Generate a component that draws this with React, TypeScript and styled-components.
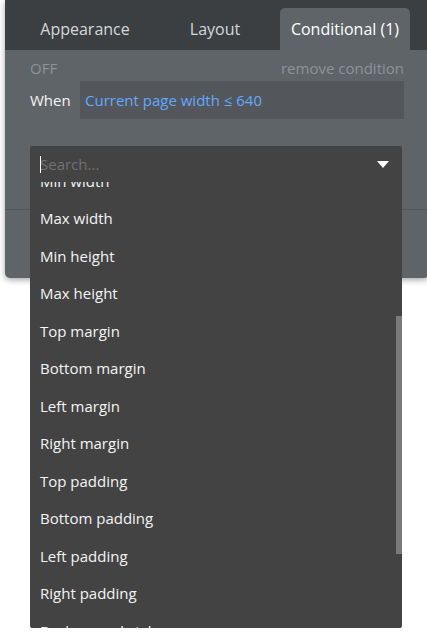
import React, { useLayoutEffect, useRef } from 'react'
import styled, { createGlobalStyle } from 'styled-components'

const GlobalStyle = createGlobalStyle`
  html, body {
    margin: 0;
    padding: 0;
    background: #ffffff;
    overflow: hidden;
  }
  body {
    font-family: 'Open Sans', 'Noto Sans', sans-serif;
  }
`

const TABS = ['Appearance', 'Layout', 'Conditional (1)']

const PROPERTIES = [
  'This element is visible',
  'This element is clickable',
  'Opacity',
  'Fit width to content',
  'Fit height to content',
  'Width',
  'Min width',
  'Max width',
  'Min height',
  'Max height',
  'Top margin',
  'Bottom margin',
  'Left margin',
  'Right margin',
  'Top padding',
  'Bottom padding',
  'Left padding',
  'Right padding',
  'Background style',
  'Border style - all borders',
  'Shadow style',
  'Font',
]

const Page = styled.div`
  width: 427px;
  height: 637px;
  overflow: hidden;
`

const Panel = styled.div`
  margin-left: 5px;
  width: 424px;
  height: 278px;
  background: #5f6468;
  border-radius: 0 0 5px 5px;
  box-shadow: 0 2px 6px rgba(0, 0, 0, 0.35);
`

const TabBar = styled.div`
  height: 50px;
  background: #3b3f42;
  display: flex;
  align-items: flex-end;
  padding-left: 15px;
`

const Tab = styled.div<{ $active?: boolean }>`
  width: 130px;
  height: 42px;
  display: flex;
  align-items: center;
  justify-content: center;
  padding-bottom: 1px;
  box-sizing: border-box;
  font-size: 16px;
  color: ${({ $active }) => ($active ? '#ffffff' : '#d6d8da')};
  background: ${({ $active }) => ($active ? '#5f6468' : 'transparent')};
  border-radius: 5px 5px 0 0;
`

const Body = styled.div`
  padding: 0 25px;
`

const StatusRow = styled.div`
  display: flex;
  justify-content: space-between;
  align-items: center;
  height: 31px;
  padding-top: 4px;
  box-sizing: border-box;
  font-size: 15px;
  color: #8e9296;
`

const WhenRow = styled.div`
  display: flex;
  align-items: center;
  height: 38px;
`

const WhenLabel = styled.div`
  width: 50px;
  padding-bottom: 1px;
  font-size: 15px;
  color: #f4f4f4;
`

const Expression = styled.div`
  flex: 1;
  height: 38px;
  display: flex;
  align-items: center;
  padding: 0 0 1px 5px;
  box-sizing: border-box;
  background: #53575b;
  font-size: 15px;
  color: #62a8ff;
`

const PropertySlot = styled.div`
  position: relative;
  height: 36px;
  margin-top: 27px;
`

const Divider = styled.div`
  margin: 27px -25px 0;
  border-top: 1px solid #53575b;
`

const Dropdown = styled.div`
  position: absolute;
  top: 0;
  left: 0;
  width: 372px;
  height: 482px;
  background: #434343;
  border-radius: 2px;
  display: flex;
  flex-direction: column;
  z-index: 2;
`

const SearchRow = styled.div`
  position: relative;
  height: 36px;
  display: flex;
  align-items: center;
  padding: 0 13px 0 10px;
  flex-shrink: 0;
`

const SearchInput = styled.input`
  flex: 1;
  background: transparent;
  border: none;
  outline: none;
  padding: 0;
  font-family: 'Open Sans', 'Noto Sans', sans-serif;
  font-size: 15px;
  color: #f0f0f0;
  caret-color: transparent;
  &::placeholder {
    color: #707070;
  }
`

const TextCursor = styled.span`
  position: absolute;
  left: 10px;
  top: 10px;
  width: 1px;
  height: 17px;
  background: #ffffff;
`

const Caret = styled.svg`
  width: 12px;
  height: 7px;
  flex-shrink: 0;
`

const List = styled.div`
  flex: 1;
  overflow-y: auto;
  padding: 5px 0;
  box-sizing: border-box;
  scrollbar-width: none;
  &::-webkit-scrollbar {
    display: none;
  }
`

const ScrollThumb = styled.div`
  position: absolute;
  right: 0;
  top: 170px;
  width: 6px;
  height: 238px;
  background: #7a7a7a;
`

const Item = styled.div`
  height: 37.5px;
  display: flex;
  align-items: center;
  padding-left: 10px;
  font-size: 15px;
  color: #f4f4f4;
  white-space: nowrap;
`

export default function App() {
  const listRef = useRef<HTMLDivElement>(null)

  useLayoutEffect(() => {
    if (listRef.current) listRef.current.scrollTop = 250
  }, [])

  return (
    <Page>
      <GlobalStyle />
      <Panel>
        <TabBar>
          {TABS.map((t, i) => (
            <Tab key={t} $active={i === 2}>
              {t}
            </Tab>
          ))}
        </TabBar>
        <Body>
          <StatusRow>
            <span>OFF</span>
            <span>remove condition</span>
          </StatusRow>
          <WhenRow>
            <WhenLabel>When</WhenLabel>
            <Expression>Current page width ≤ 640</Expression>
          </WhenRow>
          <PropertySlot>
            <Dropdown>
              <SearchRow>
                <TextCursor />
                <SearchInput placeholder="Search..." />
                <Caret viewBox="0 0 12 7">
                  <path d="M0 0 L12 0 L6 7 Z" fill="#ffffff" />
                </Caret>
              </SearchRow>
              <List ref={listRef}>
                {PROPERTIES.map((p) => (
                  <Item key={p}>{p}</Item>
                ))}
              </List>
              <ScrollThumb />
            </Dropdown>
          </PropertySlot>
          <Divider />
        </Body>
      </Panel>
    </Page>
  )
}
